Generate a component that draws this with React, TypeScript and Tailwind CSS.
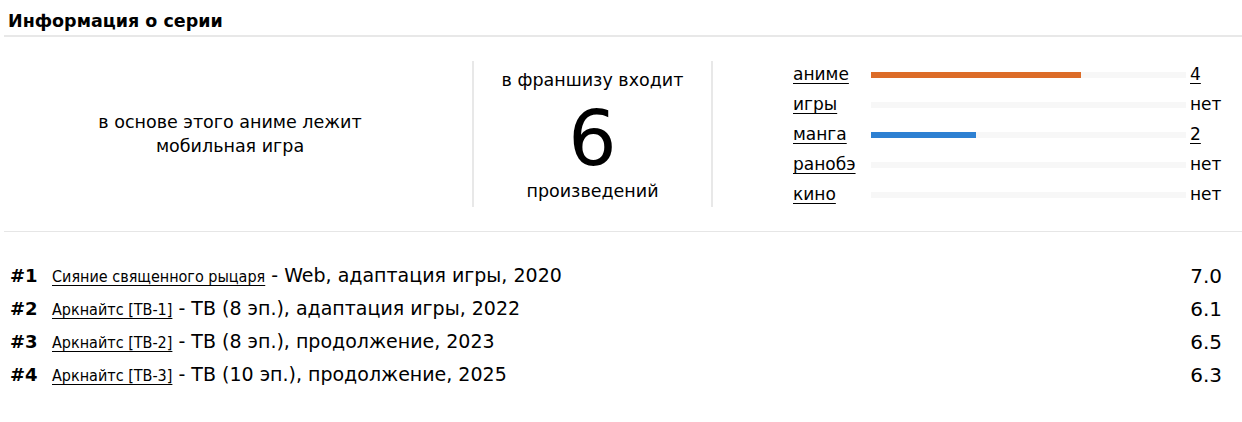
const stats = [
  { label: 'аниме', count: 4, color: 'bg-[#dc6c28]' },
  { label: 'игры', count: 0, color: '' },
  { label: 'манга', count: 2, color: 'bg-[#2d80d2]' },
  { label: 'ранобэ', count: 0, color: '' },
  { label: 'кино', count: 0, color: '' },
]

const TOTAL = 6

const entries = [
  { n: 1, title: 'Сияние священного рыцаря', rest: ' - Web, адаптация игры, 2020', score: '7.0' },
  { n: 2, title: 'Аркнайтс [ТВ-1]', rest: ' - ТВ (8 эп.), адаптация игры, 2022', score: '6.1' },
  { n: 3, title: 'Аркнайтс [ТВ-2]', rest: ' - ТВ (8 эп.), продолжение, 2023', score: '6.5' },
  { n: 4, title: 'Аркнайтс [ТВ-3]', rest: ' - ТВ (10 эп.), продолжение, 2025', score: '6.3' },
]

export default function App() {
  return (
    <div className="min-h-[422px] bg-white pl-1 text-black [font-family:'DejaVu_Sans',sans-serif]">
      {/* header */}
      <div className="flex h-[37px] items-end border-b-2 border-[#e8e8e8] pb-[2px] pl-1">
        <h2 className="text-[17.5px] font-bold leading-[24px]">Информация о серии</h2>
      </div>

      {/* stats */}
      <div className="flex border-b border-[#e6e6e6] py-6">
        <div className="flex w-[468px] items-center justify-center pr-4 text-center text-[17.5px] leading-[24px]">
          <div>
            в основе этого аниме лежит
            <br />
            мобильная игра
          </div>
        </div>

        <div className="flex h-[146px] w-[241px] flex-col items-center border-x-2 border-[#e8e8e8] text-[17.5px]">
          <div className="mt-[7px] leading-[24px]">в франшизу входит</div>
          <div className="mt-[10px] text-[76px] leading-[74px]">6</div>
          <div className="mt-[3px] leading-[24px]">произведений</div>
        </div>

        <div className="flex h-[146px] flex-1 flex-col pl-[80px] pr-5 text-[17px]">
          <div className="-mt-[1px]">
            {stats.map((s) => (
              <div key={s.label} className="flex h-[30px] items-center">
                <a className="w-[78px] cursor-pointer underline underline-offset-[3px]">{s.label}</a>
                <div className="relative h-[6px] flex-1 bg-[#f7f7f7]">
                  {s.count > 0 && (
                    <div
                      className={`absolute inset-y-0 left-0 ${s.color}`}
                      style={{ width: `${(s.count / TOTAL) * 100}%` }}
                    />
                  )}
                </div>
                <div className="w-[36px] pl-[4px]">
                  {s.count > 0 ? (
                    <a className="cursor-pointer underline underline-offset-[3px]">{s.count}</a>
                  ) : (
                    'нет'
                  )}
                </div>
              </div>
            ))}
          </div>
        </div>
      </div>

      {/* list */}
      <div className="flex flex-col pl-[6px] pr-5 pt-[27px]">
        {entries.map((e) => (
          <div key={e.n} className="flex h-[33px] items-center text-[19px]">
            <span className="w-[42px] text-[18px] font-bold">#{e.n}</span>
            <span className="flex-1">
              <a className="cursor-pointer text-[16px] underline underline-offset-[3px] [font-stretch:condensed]">
                {e.title}
              </a>
              {e.rest}
            </span>
            <span className="text-[20px]">{e.score}</span>
          </div>
        ))}
      </div>
    </div>
  )
}
